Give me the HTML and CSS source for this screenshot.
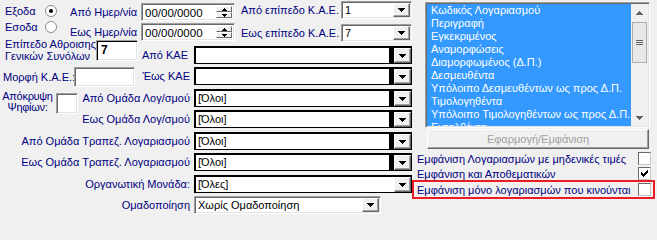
FILE: index.html
```html
<!DOCTYPE html>
<html lang="el">
<head>
<meta charset="utf-8">
<title>Φόρμα επιλογών</title>
<link rel="stylesheet" href="styles.css">
</head>
<body>
<div class="form">
  <div class="left">
    <div class="top">
      <div class="radios">
        <div class="radio-row"><span class="rlbl">Εξοδα</span><span class="radio on"></span></div>
        <div class="radio-row"><span class="rlbl">Εσοδα</span><span class="radio"></span></div>
      </div>
      <div class="dates">
        <div class="date-row"><span class="dlbl">Από Ημερ/νία</span>
          <div class="spin-edit sunken"><span class="val">00/00/0000</span>
            <span class="spin">
              <span class="sb"><svg width="5" height="3" viewBox="0 0 5 3"><path d="M2 0h1v1H2zM1 1h3v1H1zM0 2h5v1H0z"/></svg></span>
              <span class="sb"><svg width="5" height="3" viewBox="0 0 5 3"><path d="M0 0h5v1H0zM1 1h3v1H1zM2 2h1v1H2z"/></svg></span>
            </span></div></div>
        <div class="date-row"><span class="dlbl">Εως Ημερ/νία</span>
          <div class="spin-edit sunken"><span class="val">00/00/0000</span>
            <span class="spin">
              <span class="sb"><svg width="5" height="3" viewBox="0 0 5 3"><path d="M2 0h1v1H2zM1 1h3v1H1zM0 2h5v1H0z"/></svg></span>
              <span class="sb"><svg width="5" height="3" viewBox="0 0 5 3"><path d="M0 0h5v1H0zM1 1h3v1H1zM2 2h1v1H2z"/></svg></span>
            </span></div></div>
      </div>
      <div class="levels">
        <div class="level-row"><span class="llbl">Από επίπεδο Κ.Α.Ε.</span>
          <div class="combo gray sm"><span class="txt">1</span><span class="dd"><svg width="7" height="4" viewBox="0 0 7 4"><path d="M0 0h7v1H0zM1 1h5v1H1zM2 2h3v1H2zM3 3h1v1H3z"/></svg></span></div></div>
        <div class="level-row"><span class="llbl">Εως επίπεδο Κ.Α.Ε.</span>
          <div class="combo gray sm"><span class="txt">7</span><span class="dd"><svg width="7" height="4" viewBox="0 0 7 4"><path d="M0 0h7v1H0zM1 1h5v1H1zM2 2h3v1H2zM3 3h1v1H3z"/></svg></span></div></div>
      </div>
    </div>

    <div class="row3">
      <div class="sumlbl">Επίπεδο Αθροισης<br>Γενικών Συνόλων</div>
      <div class="edit7 sunken dark">7</div>
      <div class="kae first"><span class="klbl">Από ΚΑΕ</span>
        <div class="combo blk wide"><span class="txt"></span><span class="bar"></span><span class="dd"><svg width="7" height="4" viewBox="0 0 7 4"><path d="M0 0h7v1H0zM1 1h5v1H1zM2 2h3v1H2zM3 3h1v1H3z"/></svg></span></div></div>
    </div>

    <div class="row4">
      <div class="mlbl">Μορφή Κ.Α.Ε.:</div>
      <div class="editm sunken"></div>
      <div class="kae"><span class="klbl">Έως ΚΑΕ</span>
        <div class="combo blk wide"><span class="txt"></span><span class="bar"></span><span class="dd"><svg width="7" height="4" viewBox="0 0 7 4"><path d="M0 0h7v1H0zM1 1h5v1H1zM2 2h3v1H2zM3 3h1v1H3z"/></svg></span></div></div>
    </div>

    <div class="row5">
      <div class="hlbl">Απόκρυψη<br>Ψηφίων:</div>
      <div class="hbox sunken"></div>
      <div class="subrows">
        <div class="lrow"><span class="klbl">Από Ομάδα Λογ/σμού</span>
          <div class="combo blk wide"><span class="txt">[Όλοι]</span><span class="bar"></span><span class="dd"><svg width="7" height="4" viewBox="0 0 7 4"><path d="M0 0h7v1H0zM1 1h5v1H1zM2 2h3v1H2zM3 3h1v1H3z"/></svg></span></div></div>
        <div class="lrow"><span class="klbl">Εως Ομάδα Λογ/σμού</span>
          <div class="combo blk wide"><span class="txt">[Όλοι]</span><span class="bar"></span><span class="dd"><svg width="7" height="4" viewBox="0 0 7 4"><path d="M0 0h7v1H0zM1 1h5v1H1zM2 2h3v1H2zM3 3h1v1H3z"/></svg></span></div></div>
      </div>
    </div>

    <div class="lrow m4"><span class="klbl">Από Ομάδα Τραπεζ. Λογαριασμού</span>
      <div class="combo blk wide"><span class="txt">[Όλοι]</span><span class="bar"></span><span class="dd"><svg width="7" height="4" viewBox="0 0 7 4"><path d="M0 0h7v1H0zM1 1h5v1H1zM2 2h3v1H2zM3 3h1v1H3z"/></svg></span></div></div>
    <div class="lrow m3"><span class="klbl">Εως Ομάδα Τραπεζ. Λογαριασμού</span>
      <div class="combo blk wide"><span class="txt">[Όλοι]</span><span class="bar"></span><span class="dd"><svg width="7" height="4" viewBox="0 0 7 4"><path d="M0 0h7v1H0zM1 1h5v1H1zM2 2h3v1H2zM3 3h1v1H3z"/></svg></span></div></div>
    <div class="lrow m4"><span class="klbl">Οργανωτική Μονάδα:</span>
      <div class="combo blk wide"><span class="txt">[Όλες]</span><span class="dd"><svg width="7" height="4" viewBox="0 0 7 4"><path d="M0 0h7v1H0zM1 1h5v1H1zM2 2h3v1H2zM3 3h1v1H3z"/></svg></span></div></div>
    <div class="lrow m3"><span class="klbl">Ομαδοποίηση</span>
      <div class="combo gray group"><span class="txt">Χωρίς Ομαδοποίηση</span><span class="dd"><svg width="7" height="4" viewBox="0 0 7 4"><path d="M0 0h7v1H0zM1 1h5v1H1zM2 2h3v1H2zM3 3h1v1H3z"/></svg></span></div></div>
  </div>

  <div class="right">
    <div class="listbox sunken">
      <div class="items">
        <div>Κωδικός Λογαριασμού</div>
        <div>Περιγραφή</div>
        <div>Εγκεκριμένος</div>
        <div>Αναμορφώσεις</div>
        <div>Διαμορφωμένος (Δ.Π.)</div>
        <div>Δεσμευθέντα</div>
        <div>Υπόλοιπο Δεσμευθέντων ως προς Δ.Π.</div>
        <div>Τιμολογηθέντα</div>
        <div>Υπόλοιπο Τιμολογηθέντων ως προς Δ.Π.</div>
        <div>Ενταλθέντα</div>
      </div>
      <div class="sbar">
        <div class="sarr"><svg width="7" height="4" viewBox="0 0 7 4"><path d="M3 0h1v1H3zM2 1h3v1H2zM1 2h5v1H1zM0 3h7v1H0z"/></svg></div>
        <div class="thumb"><span></span><span></span><span></span></div>
        <div class="grow"></div>
        <div class="sarr"><svg width="7" height="4" viewBox="0 0 7 4"><path d="M0 0h7v1H0zM1 1h5v1H1zM2 2h3v1H2zM3 3h1v1H3z"/></svg></div>
      </div>
    </div>
    <div class="apply">Εφαρμογή/Εμφάνιση</div>
    <div class="chk first"><span>Εμφάνιση Λογαριασμών με μηδενικές τιμές</span><span class="cb"></span></div>
    <div class="chk second"><span>Εμφάνιση και Αποθεματικών</span><span class="cb"><svg width="11" height="11" viewBox="0 0 11 11"><path d="M2 4h1v3H2zM3 5h1v3H3zM4 6h1v3H4zM5 5h1v3H5zM6 4h1v3H6zM7 3h1v3H7zM8 2h1v3H8z"/></svg></span></div>
    <div class="redbox"><span>Εμφάνιση μόνο λογαριασμών που κινούνται</span><span class="cb"></span></div>
  </div>
</div>
</body>
</html>
```

FILE: styles.css
```css
* { box-sizing: border-box; }
html, body { margin: 0; padding: 0; }
body {
  background: #f0f0f0;
  font-family: "Liberation Sans", Arial, sans-serif;
  font-size: 11px;
  color: #000080;
  width: 657px;
  height: 218px;
  overflow: hidden;
}
.form { display: flex; align-items: flex-start; }
.left { width: 412px; display: flex; flex-direction: column; }
.right { width: 245px; display: flex; flex-direction: column; }

.sunken {
  background: #fff;
  border: 1px solid;
  border-color: #a0a0a0 #fff #fff #a0a0a0;
  box-shadow: inset 1px 1px 0 #696969, inset -1px -1px 0 #e3e3e3;
}
.sunken.dark { box-shadow: inset 1px 1px 0 #000, inset -1px -1px 0 #e3e3e3; }

/* top block */
.top { display: flex; height: 40px; align-items: flex-start; }
.radios { width: 64px; padding: 4px 0 0 5px; display: flex; flex-direction: column; gap: 3px; }
.radio-row { display: flex; align-items: center; height: 13px; }
.rlbl { width: 40px; }
.radio {
  width: 12px; height: 12px; border-radius: 50%;
  background: #fff; border: 1px solid #8a8a8a;
  display: flex; align-items: center; justify-content: center;
}
.radio.on::after { content: ""; width: 4px; height: 4px; border-radius: 50%; background: #000; }

.dates { width: 171px; padding-top: 3px; display: flex; flex-direction: column; gap: 2px; }
.date-row { display: flex; align-items: center; height: 18px; }
.dlbl { width: 77px; padding-right: 4px; text-align: right; white-space: nowrap; }
.spin-edit { width: 94px; height: 18px; display: flex; padding: 2px; }
.val { flex: 1; color: #000; line-height: 14px; padding-left: 1px; font-size: 11.5px; }
.spin { width: 16px; display: flex; flex-direction: column; }
.sb {
  flex: 1; background: #f0f0f0;
  border: 1px solid; border-color: #fff #696969 #696969 #fff;
  display: flex; align-items: center; justify-content: center;
}
.sb svg { fill: #000; display: block; }

.levels { margin-left: 6px; padding-top: 1px; display: flex; flex-direction: column; gap: 5px; }
.level-row { display: flex; align-items: center; height: 18px; }
.llbl { width: 100px; white-space: nowrap; }

/* combos */
.combo { display: flex; height: 18px; background: #fff; }
.combo.blk { border: 1px solid #000; box-shadow: inset 1px 1px 0 #000; padding: 1px 0 0 1px; }
.combo.gray {
  border: 1px solid; border-color: #a0a0a0 #fff #fff #a0a0a0;
  box-shadow: inset 1px 1px 0 #696969, inset -1px -1px 0 #e3e3e3;
  padding: 1px;
}
.combo.sm { width: 71px; }
.combo.wide { width: 218px; }
.combo.group { width: 187px; margin-right: 31px; }
.txt { flex: 1; color: #000; padding-left: 2px; line-height: 14px; white-space: nowrap; overflow: hidden; }
.bar { width: 5px; background: #000; }
.dd {
  width: 17px; background: #f0f0f0;
  border: 1px solid; border-color: #fff #696969 #696969 #fff;
  box-shadow: inset -1px -1px 0 #a0a0a0;
  display: flex; align-items: center; justify-content: center;
}
.dd svg { fill: #000; display: block; }

/* middle rows */
.row3 { display: flex; align-items: flex-start; height: 25px; }
.sumlbl { margin: -2px 0 0 5px; width: 91px; line-height: 12px; white-space: nowrap; }
.edit7 { width: 42px; height: 21px; color: #000; font-weight: bold; font-size: 12px; padding: 2px 0 0 4px; }
.kae { flex: 1; display: flex; align-items: center; }
.kae.first { margin-top: 6px; }
.klbl { flex: 1; text-align: right; padding-right: 4px; white-space: nowrap; }
.kae.first .klbl { padding-right: 6px; }

.row4 { display: flex; align-items: flex-start; margin-top: 2px; height: 20px; }
.mlbl { margin-left: 3px; width: 71px; line-height: 20px; white-space: nowrap; }
.editm { width: 61px; height: 20px; }

.row5 { display: flex; align-items: flex-start; margin-top: 2px; }
.hlbl { margin: 2px 0 0 2px; width: 51px; text-align: center; line-height: 11px; letter-spacing: -0.3px; white-space: nowrap; }
.hbox { width: 22px; height: 21px; margin: 4px 0 0 3px; }
.subrows { flex: 1; display: flex; flex-direction: column; gap: 3px; }
.lrow { display: flex; align-items: center; height: 18px; }
.lrow.m4 { margin-top: 4px; }
.lrow.m3 { margin-top: 3px; }

/* right side */
.listbox { margin: 2px 0 0 13px; width: 225px; height: 126px; display: flex; padding: 1px; }
.items {
  flex: 1; background: #3399ff; color: #fff;
  padding: 0 0 0 4px; line-height: 13px;
  overflow: hidden; white-space: nowrap;
}
.sbar { width: 17px; display: flex; flex-direction: column; background: #f0f0f0; }
.sarr { height: 17px; display: flex; align-items: center; justify-content: center; }
.sarr svg { fill: #606060; display: block; }
.thumb {
  height: 41px; margin: 1px 1px 0 1px;
  background: #e8e8e8; border: 1px solid #adadad;
  display: flex; flex-direction: column; align-items: center; justify-content: center; gap: 1px;
}
.thumb span { width: 7px; height: 1px; background: #606060; }
.grow { flex: 1; }

.apply {
  margin: 1px 0 0 15px; width: 222px; height: 20px;
  border: 1px solid; border-color: #fff #696969 #696969 #fff;
  background: #f0f0f0;
  box-shadow: inset -1px -1px 0 #a0a0a0;
  color: #a0a0a0; text-align: center; line-height: 18px;
}

.chk { display: flex; align-items: center; height: 13px; padding-left: 5px; white-space: nowrap; }
.chk.first { margin-top: 3px; }
.chk.second { margin-top: 2px; }
.cb {
  width: 13px; height: 13px; margin-left: auto; margin-right: 6px;
  background: #fff; border: 1px solid;
  border-color: #696969 #c8c8c8 #c8c8c8 #696969;
  display: flex; align-items: center; justify-content: center;
}
.cb svg { fill: #000; display: block; }
.redbox {
  display: flex; align-items: center;
  width: 243px; height: 19px;
  border: 2px solid #ed1c24;
  padding: 0 2px 0 3px;
  white-space: nowrap;
}
.redbox .cb { margin-right: 0; }
```
